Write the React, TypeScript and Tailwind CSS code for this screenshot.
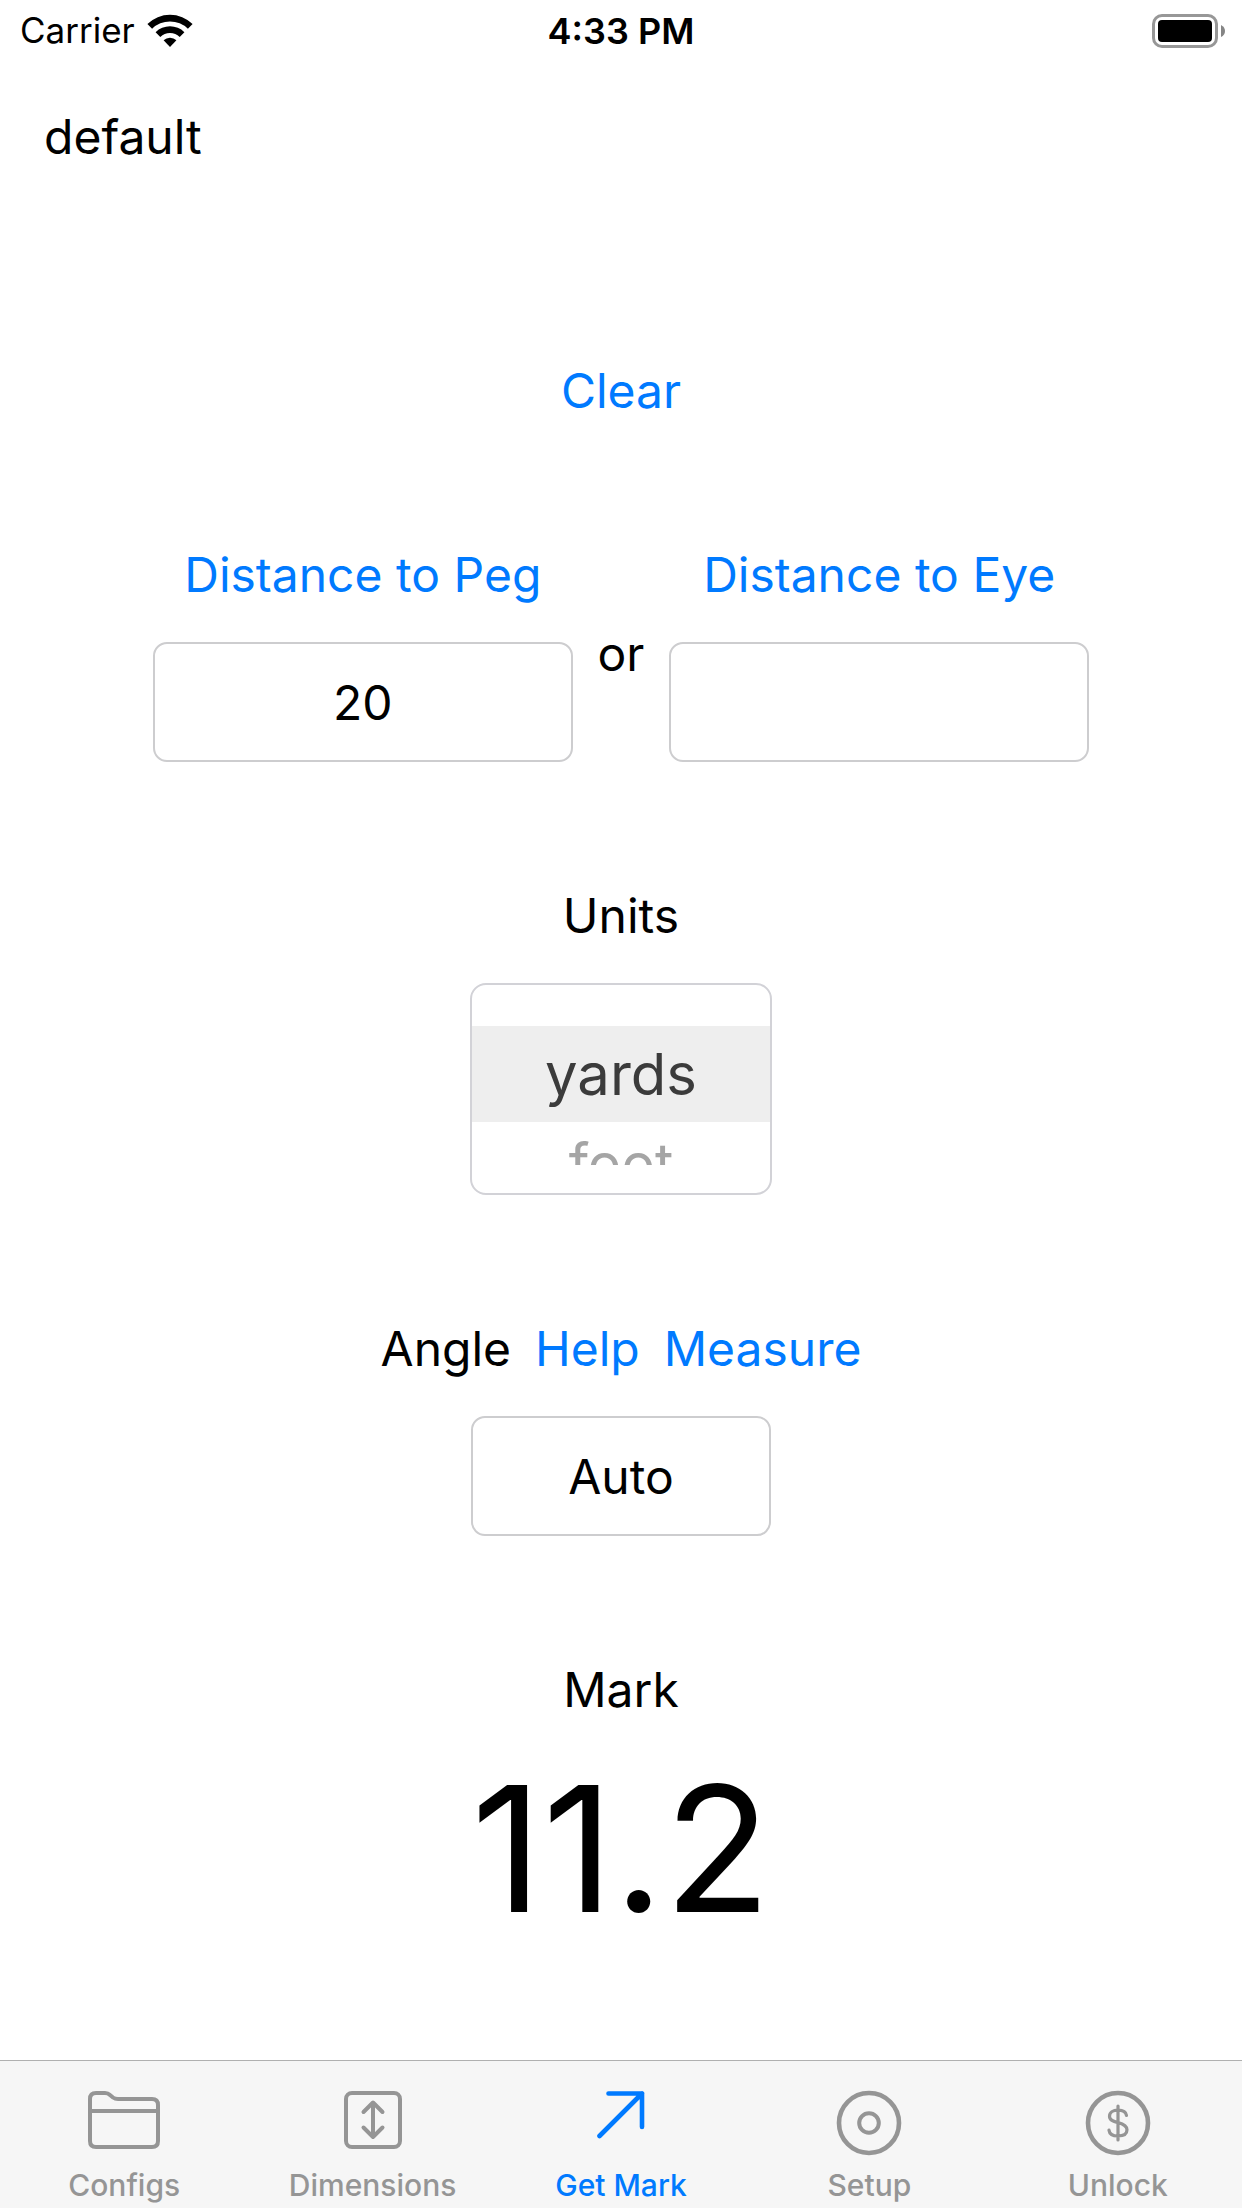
import React, { useState } from "react";

function WifiIcon() {
  return (
    <svg width="46" height="34" viewBox="0 0 46 34" aria-hidden="true">
      <path d="M0.4 10 A32.2 32.2 0 0 1 45.6 10 L40.9 14.7 A25.6 25.6 0 0 0 5.1 14.7 Z" />
      <path d="M8.6 18.2 A20.5 20.5 0 0 1 37.4 18.2 L32.7 22.9 A13.9 13.9 0 0 0 13.3 22.9 Z" />
      <path d="M16.6 26.2 A9.3 9.3 0 0 1 29.4 26.2 L23 33 Z" />
    </svg>
  );
}

function BatteryIcon() {
  return (
    <svg width="74" height="34" viewBox="0 0 74 34" aria-hidden="true">
      <rect x="1.5" y="1.5" width="63" height="31" rx="8.5" fill="none" stroke="#979797" strokeWidth="3" />
      <rect x="6" y="6" width="54" height="22" rx="4" />
      <path d="M69 11 Q73 13 73 17 Q73 21 69 23 Z" fill="#858585" />
    </svg>
  );
}

const stroke = {
  fill: "none",
  stroke: "currentColor",
  strokeWidth: 4,
  strokeLinecap: "round" as const,
  strokeLinejoin: "round" as const,
  "aria-hidden": true,
};

function FolderIcon() {
  return (
    <svg width="72" height="60" viewBox="0 0 72 60" {...stroke}>
      <path d="M2 9 Q2 3 8 3 H17 Q20 3 22 5 L25 7.500 Q27 9 30 9 H64 Q70 9 70 15 V51 Q70 57 64 57 H8 Q2 57 2 51 Z" />
      <path d="M2 21 H70" />
    </svg>
  );
}

function DimensionsIcon() {
  return (
    <svg width="58" height="60" viewBox="0 0 58 60" {...stroke}>
      <rect x="2" y="3" width="54" height="54" rx="6" />
      <path d="M29 13 V47 M19.500 22 L29 12.500 L38.500 22 M19.500 37.500 L29 47 L38.500 37.500" />
    </svg>
  );
}

function ArrowIcon() {
  return (
    <svg width="48" height="49" viewBox="0 0 48 49" {...stroke} strokeWidth={4.6}>
      <path d="M2.500 46 L45 3.500 M11.500 3.500 H45 V37" />
    </svg>
  );
}

function SetupIcon() {
  return (
    <svg width="66" height="66" viewBox="0 0 66 66" {...stroke} strokeWidth={4.6}>
      <circle cx="33" cy="33" r="30" />
      <circle cx="33" cy="33" r="9.800" strokeWidth={4} />
    </svg>
  );
}

function UnlockIcon() {
  return (
    <svg width="66" height="66" viewBox="0 0 66 66" {...stroke} strokeWidth={4.6}>
      <circle cx="33" cy="33" r="30" />
      <path
        d="M33 16 V50 M41.500 25.500 C41 22 37.500 20.200 33 20.200 C28 20.200 24.500 22.500 24.500 26.200 C24.500 30 28 31.300 33 32.600 C38.500 34 42 35.600 42 39.800 C42 43.800 38.500 46 33 46 C28 46 24.500 44 24 40.200"
        strokeWidth={3.2}
      />
    </svg>
  );
}

const tabs = [
  { name: "Configs", Icon: FolderIcon },
  { name: "Dimensions", Icon: DimensionsIcon },
  { name: "Get Mark", Icon: ArrowIcon },
  { name: "Setup", Icon: SetupIcon },
  { name: "Unlock", Icon: UnlockIcon },
];

const field =
  "h-[120px] w-full rounded-[14px] border-2 border-[#cdcdcf] bg-white text-center text-black outline-none";

export default function App() {
  const [peg, setPeg] = useState("20");
  const [eye, setEye] = useState("");
  const [angle, setAngle] = useState("Auto");
  const [tab, setTab] = useState("Get Mark");

  return (
    <div className="flex min-h-screen flex-col bg-white font-['Inter',sans-serif] text-[48px] leading-[60px] text-black">
      <header className="grid h-[61px] grid-cols-3 items-center px-4 text-4xl">
        <div className="flex items-center gap-3 pl-1">
          <span className="text-[35px]">Carrier</span>
          <WifiIcon />
        </div>
        <time className="text-center font-semibold">4:33 PM</time>
        <div className="flex justify-end">
          <BatteryIcon />
        </div>
      </header>

      <main className="flex flex-1 flex-col px-11 pt-[46px]">
        <h1>default</h1>

        <div className="mt-[194px] flex flex-col items-center gap-[124px]">
          <button
            type="button"
            className="text-[#007aff]"
            onClick={() => {
              setPeg("");
              setEye("");
            }}
          >
            Clear
          </button>

          <div className="grid w-full max-w-[936px] grid-cols-[1fr_auto_1fr] items-center gap-[25px]">
            <div className="flex flex-col items-center gap-[37px]">
              <label htmlFor="peg" className="text-[#007aff]">Distance to Peg</label>
              <input id="peg" className={field} value={peg} onChange={(e) => setPeg(e.target.value)} />
            </div>
            <span>or</span>
            <div className="flex flex-col items-center gap-[37px]">
              <label htmlFor="eye" className="text-[#007aff]">Distance to Eye</label>
              <input id="eye" className={field} value={eye} onChange={(e) => setEye(e.target.value)} />
            </div>
          </div>

          <div className="flex flex-col items-center gap-[37px]">
            <span id="units">Units</span>
            <div className="w-[302px] rounded-[16px] border-2 border-[#d2d2d7] pb-7">
              <div
                role="listbox"
                aria-labelledby="units"
                className="h-[180px] overflow-hidden pt-[41px] text-center text-[58px] leading-[96px]"
              >
                <div role="option" aria-selected="true" className="bg-[#eeeeee] text-[#3b3b3b]">yards</div>
                <div role="option" aria-selected="false" className="text-[56px] leading-[84px] text-[#a5a5a5]">foot</div>
              </div>
            </div>
          </div>

          <div className="flex flex-col items-center gap-[37px]">
            <div className="flex gap-6">
              <label htmlFor="angle">Angle</label>
              <button type="button" className="text-[#007aff]">Help</button>
              <button type="button" className="text-[#007aff]">Measure</button>
            </div>
            <div className="w-[300px]">
              <input id="angle" className={field} value={angle} onChange={(e) => setAngle(e.target.value)} />
            </div>
          </div>

          <div className="flex flex-col items-center gap-[22px]">
            <span>Mark</span>
            <output className="text-[175px] leading-[212px]">11.2</output>
          </div>
        </div>
      </main>

      <nav className="grid grid-cols-5 border-t border-[#b0b0b0] bg-[#f6f6f6] pt-[29px] pb-[5px]">
        {tabs.map(({ name, Icon }) => (
          <button
            key={name}
            type="button"
            onClick={() => setTab(name)}
            className={`flex flex-col items-center gap-[11px] text-[30px] leading-9 font-medium ${
              name === tab ? "text-[#007aff]" : "text-[#959595]"
            }`}
          >
            <span className="flex h-[66px] items-start">
              <Icon />
            </span>
            {name}
          </button>
        ))}
      </nav>
    </div>
  );
}
